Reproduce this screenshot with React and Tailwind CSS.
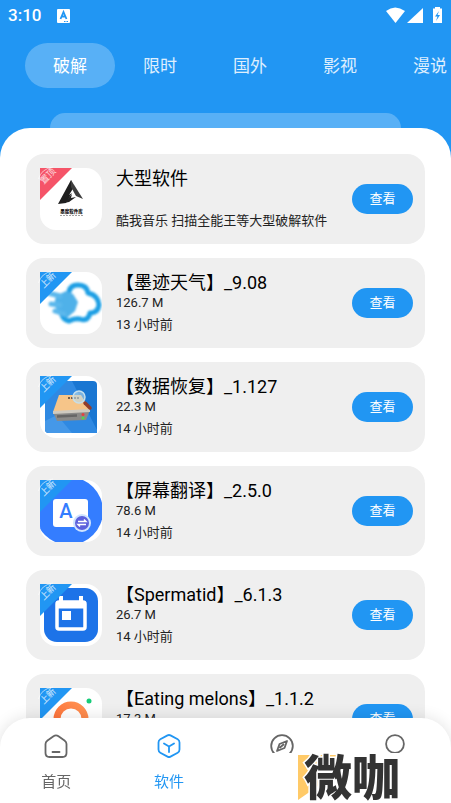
import { useState } from "react";

const tabs = ["破解", "限时", "国外", "影视", "漫说"];

const AppLogo = () => (
    <svg viewBox="0 0 62 62" className="h-full w-full">
        <path d="M31 12 34 19 29 27 32 25 26 35 18 36Z" fill="#1f1f1f" />
        <path d="M31 12 43 31 36 28 31 19Z" fill="#3d3d3d" />
        <path d="M24 35 32 26 31 30 36 29 29 34Z" fill="#222" />
        <text x="31.500" y="44.500" textAnchor="middle" fontSize="4.500" fontWeight="900" fill="#111">墨魔软件库</text>
        <path d="M20 47.500H43" stroke="#888" strokeWidth="0.800" strokeDasharray="2 1" />
    </svg>
);

const WeatherLogo = () => (
    <svg viewBox="0 0 62 62" className="h-full w-full">
        <defs>
            <filter id="cloud" x="-20%" y="-20%" width="140%" height="140%">
                <feGaussianBlur stdDeviation="1.100" />
            </filter>
        </defs>
        <g filter="url(#cloud)" fill="none" strokeLinecap="round" strokeLinejoin="round">
            <path d="M29 20Q30 13 38 13 47 13 48 21 58 23 59 33 58 41 50 41 48 50 40 47 34 46 29 49 24 48 22 43" stroke="#1e9fe4" strokeWidth="5" />
            <path d="M16 24 26 19 33 22 38 30 35 39 27 46 19 41 14 33Z" fill="#4fb1e9" />
            <path d="M8 21 20 24M11 32 20 33M15 39 24 42" stroke="#5bb8ec" strokeWidth="5" />
        </g>
    </svg>
);

const DiskLogo = () => (
    <svg viewBox="0 0 62 62" className="h-full w-full">
        <rect x="5" y="5" width="52" height="52" rx="4" fill="#1976d2" />
        <path d="M5 5H32L57 54V57H9Q5 57 5 53Z" fill="#2f89e2" />
        <path d="M5 45 17 39 32 57H9Q5 57 5 53Z" fill="#4598e8" />
        <path d="M19 19H41L50 34 13 36Z" fill="#f6c589" />
        <path d="M13 36 50 34 46 44 17 45Z" fill="#8b8a88" />
        <path d="M13 35 50 33V36L13 38Z" fill="#cfcac0" />
        <path d="M17 40.500 37 39.500" stroke="#666" strokeWidth="2.500" />
        <circle cx="43" cy="38.500" r="1.500" fill="#e64040" />
        <circle cx="43" cy="42" r="1.500" fill="#52d252" />
        <path d="M28 22H40" stroke="#755e4a" strokeWidth="2" strokeDasharray="2 1" />
        <path d="m45 27 5 5" stroke="#913d2c" strokeWidth="3.500" strokeLinecap="round" />
        <circle cx="39" cy="21" r="6" fill="#bddbea99" stroke="#c5dfec" strokeWidth="1.500" />
    </svg>
);

const TranslateLogo = () => (
    <svg viewBox="0 0 62 62" className="h-full w-full">
        <circle cx="29" cy="31" r="34" fill="#347dff" />
        <rect x="13" y="19" width="35" height="28" rx="3" fill="white" />
        <text x="26" y="38" textAnchor="middle" fontSize="20" fontWeight="500" fill="#347dff">A</text>
        <circle cx="42" cy="43" r="9" fill="#cfe4ff" />
        <circle cx="42" cy="43" r="7" fill="#5c61dd" />
        <path d="M38 41.500H46L44 39.500M46 44.500H38L40 46.500" fill="none" stroke="white" strokeWidth="1.400" />
    </svg>
);

const CalendarLogo = () => (
    <svg viewBox="0 0 62 62" className="h-full w-full">
        <rect x="4" y="4" width="54" height="54" rx="13" fill="#1d73e8" />
        <rect x="17" y="18" width="28" height="27" rx="2" fill="none" stroke="white" strokeWidth="3.500" />
        <path d="M16 21H46" stroke="white" strokeWidth="7" />
        <path d="M21 12V19M41 12V19" stroke="white" strokeWidth="4" />
        <rect x="22" y="27" width="9" height="9" fill="white" />
    </svg>
);

const MelonLogo = () => (
    <svg viewBox="0 0 62 62" className="h-full w-full">
        <defs>
            <linearGradient id="melon" x1="0" y1="1" x2="1" y2="0">
                <stop stopColor="#ff6b35" />
                <stop offset="1" stopColor="#ff9252" />
            </linearGradient>
        </defs>
        <circle cx="31" cy="31" r="14" fill="none" stroke="url(#melon)" strokeWidth="7" />
        <circle cx="49" cy="13" r="2.500" fill="#16cc79" />
    </svg>
);

const apps = [
    { title: "大型软件", desc: "酷我音乐 扫描全能王等大型破解软件", badge: "置顶", Logo: AppLogo },
    { title: "【墨迹天气】_9.08", size: "126.7 M", time: "13 小时前", badge: "上新", Logo: WeatherLogo },
    { title: "【数据恢复】_1.127", size: "22.3 M", time: "14 小时前", badge: "上新", Logo: DiskLogo },
    { title: "【屏幕翻译】_2.5.0", size: "78.6 M", time: "14 小时前", badge: "上新", Logo: TranslateLogo },
    { title: "【Spermatid】_6.1.3", size: "26.7 M", time: "14 小时前", badge: "上新", Logo: CalendarLogo },
    { title: "【Eating melons】_1.1.2", size: "17.3 M", time: "14 小时前", badge: "上新", Logo: MelonLogo },
];

const navItems = [
    {
        name: "首页",
        label: "首页",
        icon: <path d="M9.500 2.300 3.500 6.500Q1.500 8 1.500 10V19Q1.500 23 5.500 23H18.500Q22.500 23 22.500 19V10Q22.500 8 20.500 6.500L14.500 2.300Q12 .6 9.500 2.300ZM8.500 18H15.500" />,
    },
    {
        name: "软件",
        label: "软件",
        icon: <path d="M10.500 1.400 3.300 5.300Q1.500 6.300 1.500 8.500V15.500Q1.500 17.700 3.300 18.700L10.500 22.600Q12 23.400 13.500 22.600L20.700 18.700Q22.500 17.700 22.500 15.500V8.500Q22.500 6.300 20.700 5.300L13.500 1.400Q12 .6 10.500 1.400ZM7 9.500 12 12.500 17 9.500M12 12.500V18" />,
    },
    {
        name: "发现",
        icon: (
            <>
                <circle cx="12" cy="12" r="10.800" />
                <path d="M17 7 14.500 14 7 17 9.500 10ZM10 13.500 13.500 10.500" />
            </>
        ),
    },
    { name: "我的", icon: <circle cx="12" cy="10" r="8.900" /> },
];

const StatusBar = () => (
    <div className="flex h-8 items-center justify-between px-2 text-white">
        <div className="flex items-center gap-4">
            <span className="text-[17px] font-medium">3:10</span>
            <svg viewBox="0 0 14 14" className="h-3.5 w-3.5">
                <rect width="13" height="14" rx="1" fill="white" />
                <path d="M3.500 10 6.500 3 9.500 10M4.500 7.500H8.500" fill="none" stroke="#2196f3" strokeWidth="1.800" />
                <path d="M7 12.500H11" stroke="#2196f3" strokeDasharray="1.500 1" />
            </svg>
        </div>
        <svg viewBox="0 0 57 18" className="h-[18px] w-[57px]" fill="white">
            <path d="M0 4Q9-3 19 4L9.500 16Z" />
            <path d="M37 1V16H21Z" />
            <path d="M49 0H54V1.500H56V16H47V1.500H49Z" />
            <path d="M53 4 49 9.500H51.500L50 14 54 8H51.500Z" fill="#2196f3" />
        </svg>
    </div>
);

const Badge = ({ text }) => (
    <div className="absolute left-0 top-0 h-8 w-8">
        <svg viewBox="0 0 32 32" className="h-8 w-8 overflow-visible">
            <path d="M0 0H32L0 32Z" fill={text === "置顶" ? "#f55468" : "#2196f3"} />
            <path d="M-1.500 11Q1 1 13-1" fill="none" stroke="white" strokeOpacity="0.6" />
        </svg>
        <span className="absolute -left-1 top-0 w-6 -rotate-45 text-center text-[9px] leading-4 text-white/80">{text}</span>
    </div>
);

const AppCard = ({ app }) => {
    const { title, desc, size, time, badge, Logo } = app;

    return (
        <li className="flex h-[90px] items-center rounded-[18px] bg-[#efefef] pl-3.5 pr-3">
            <div className="relative h-[62px] w-[62px] shrink-0">
                <div className="h-full w-full overflow-hidden rounded-2xl bg-white">
                    <Logo />
                </div>
                <Badge text={badge} />
            </div>
            <div className="ml-3.5 min-w-0 flex-1 whitespace-nowrap text-[13px] text-[#222]">
                <h2 className="text-lg leading-6 text-black">{title}</h2>
                <p className="h-4 leading-4">{size}</p>
                <p className="mt-1 leading-5">{desc || time}</p>
            </div>
            <button type="button" className="h-[30px] w-[61px] shrink-0 rounded-full bg-[#2196f3] text-[13px] text-white">
                查看
            </button>
        </li>
    );
};

export default function App() {
    const [tab, setTab] = useState("破解");
    const [page, setPage] = useState("软件");

    return (
        <div className="relative flex h-screen flex-col overflow-hidden bg-[#2196f3] font-['Roboto','Noto_Sans_CJK_SC',sans-serif]">
            <header>
                <StatusBar />
                <div className="mt-[11px] flex overflow-hidden pl-[25px]">
                    {tabs.map((t) => (
                        <button
                            key={t}
                            type="button"
                            onClick={() => setTab(t)}
                            className={`h-[45px] w-[90px] shrink-0 rounded-full pt-0.5 text-[17px] ${tab === t ? "bg-white/25 text-white" : "text-white/85"}`}
                        >
                            {t}
                        </button>
                    ))}
                </div>
                <div className="mx-[50px] mt-[25px] h-[15px] rounded-t-[15px] bg-white/25" />
            </header>

            <main className="min-h-0 flex-1 overflow-y-auto rounded-t-[30px] bg-white px-[26px] pt-[26px] [scrollbar-width:none]">
                <ul className="flex flex-col gap-3.5 pb-24">
                    {apps.map((app) => (
                        <AppCard key={app.title} app={app} />
                    ))}
                </ul>
            </main>

            {/* Bottom navigation */}
            <nav className="absolute inset-x-0 bottom-0 grid h-[85px] grid-cols-4 rounded-t-[30px] bg-white shadow-[0_0_16px_rgba(0,0,0,0.12)]">
                {navItems.map((item) => (
                    <button
                        key={item.name}
                        type="button"
                        aria-label={item.name}
                        onClick={() => setPage(item.name)}
                        className={`flex flex-col items-center gap-3 pt-4 text-[15px] ${page === item.name ? "text-[#2196f3]" : "text-[#666]"}`}
                    >
                        <svg viewBox="0 0 24 24" className="h-6 w-6" fill="none" stroke="currentColor" strokeWidth="1.800" strokeLinecap="round" strokeLinejoin="round">
                            {item.icon}
                        </svg>
                        {item.label && <span className="leading-6">{item.label}</span>}
                    </button>
                ))}
            </nav>

            {/* Brand mark */}
            <div className="absolute bottom-0 right-0 bg-white pl-8 pr-11">
                <svg viewBox="0 0 110 50" className="h-[50px] w-[110px] overflow-visible">
                    <path d="M1 2H46L37 12V22L1 47Z" fill="#ffca68" />
                    <text
                        x="7"
                        y="42"
                        fontSize="48"
                        fontWeight="900"
                        fill="#333"
                        stroke="white"
                        strokeWidth="3"
                        paintOrder="stroke"
                    >
                        微咖
                    </text>
                </svg>
            </div>
        </div>
    );
}
